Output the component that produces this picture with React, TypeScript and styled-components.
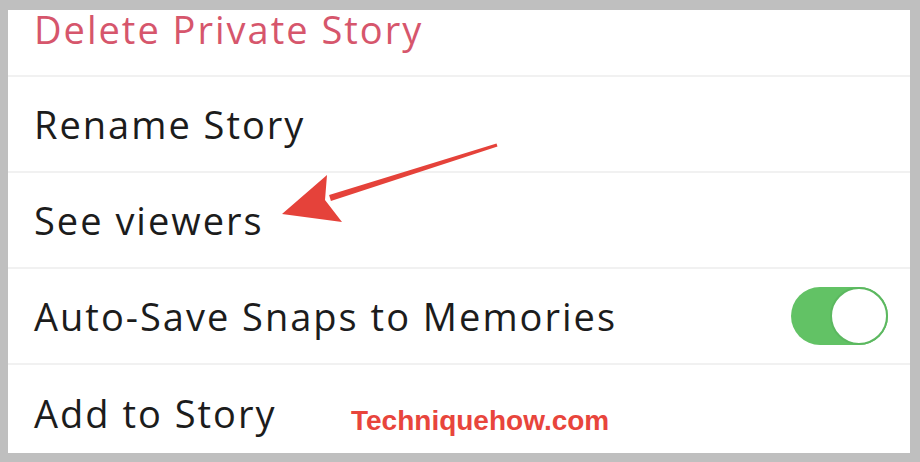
import React from "react";
import styled, { createGlobalStyle } from "styled-components";

type Item = {
  label: string;
  danger?: boolean;
  toggle?: boolean;
};

const items: Item[] = [
  { label: "Delete Private Story", danger: true },
  { label: "Rename Story" },
  { label: "See viewers" },
  { label: "Auto-Save Snaps to Memories", toggle: true },
  { label: "Add to Story" },
];

const App: React.FC = () => {
  return (
    <>
      <GlobalStyle />
      <Frame>
        <Panel>
          <List>
            {items.map((item, i) => (
              <Row key={item.label} $cut={i === 0}>
                <Label $danger={item.danger}>{item.label}</Label>
                {item.toggle && (
                  <Switch>
                    <Knob />
                  </Switch>
                )}
              </Row>
            ))}
          </List>
          <Arrow viewBox="0 0 240 100" aria-hidden>
            <path d="M226.5 13.6 L227.5 16.4 L60.9 70.9 L59.1 65.1 Z" fill="#e5423a" />
            <path d="M12 84 L57 45 L55 70 L72 92 Z" fill="#e5423a" />
          </Arrow>
          <Watermark>Techniquehow.com</Watermark>
        </Panel>
      </Frame>
    </>
  );
};

const GlobalStyle = createGlobalStyle`
  html, body {
    margin: 0;
    background: #bfbfbf;
  }
`;

const Frame = styled.div`
  padding: 10px 10px 9px 8px;
  width: 920px;
  height: 462px;
  box-sizing: border-box;
`;

const Panel = styled.div`
  position: relative;
  background: #ffffff;
  width: 902px;
  height: 443px;
`;

const List = styled.div`
  display: flex;
  flex-direction: column;
`;

// top and bottom rows are cut by the screenshot edges
const Row = styled.div<{ $cut?: boolean }>`
  display: flex;
  align-items: center;
  justify-content: space-between;
  height: ${({ $cut }) => ($cut ? "67px" : "96px")};
  box-sizing: border-box;
  padding: ${({ $cut }) => ($cut ? "0 22px 27px 26px" : "0 22px 0 26px")};
  border-bottom: 2px solid #f1f1f1;
  &:last-child {
    height: 86px;
    border-bottom: none;
    padding-top: 10px;
  }
`;

const Label = styled.span<{ $danger?: boolean }>`
  font-family: "Open Sans", "Noto Sans", sans-serif;
  font-size: 38px;
  line-height: 1;
  letter-spacing: 2px;
  color: ${({ $danger }) => ($danger ? "#d6566c" : "#1c1c1c")};
`;

const Switch = styled.div`
  display: flex;
  align-items: center;
  justify-content: flex-end;
  width: 97px;
  height: 58px;
  border-radius: 29px;
  background: #62c265;
  box-sizing: border-box;
  padding: 1px;
`;

const Knob = styled.div`
  width: 54px;
  height: 54px;
  border-radius: 50%;
  background: #ffffff;
  border: 2px solid #5cb860;
  box-sizing: content-box;
  margin-right: -1px;
`;

const Arrow = styled.svg`
  position: absolute;
  left: 262px;
  top: 120px;
  width: 240px;
  height: 100px;
`;

const Watermark = styled.div`
  position: absolute;
  left: 343px;
  top: 395px;
  font-family: "Liberation Sans", Arial, sans-serif;
  font-weight: 700;
  font-size: 28px;
  color: #e8453c;
`;

export default App;
